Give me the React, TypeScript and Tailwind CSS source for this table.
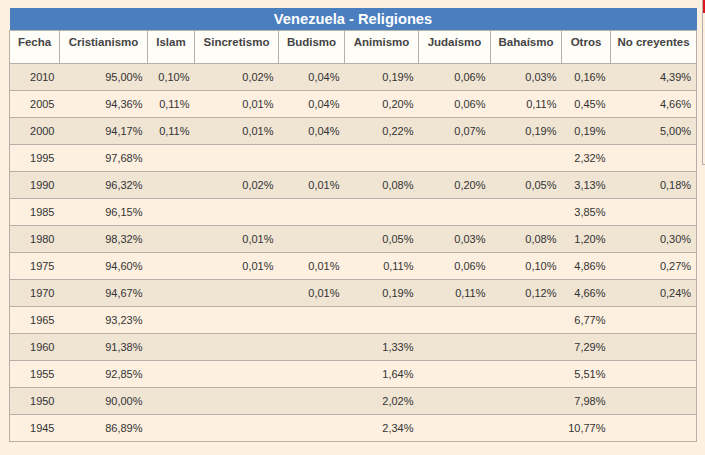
import React from "react";

const cols = [
  { name: "Fecha", w: 50 },
  { name: "Cristianismo", w: 88 },
  { name: "Islam", w: 47 },
  { name: "Sincretismo", w: 84 },
  { name: "Budismo", w: 66 },
  { name: "Animismo", w: 74 },
  { name: "Judaísmo", w: 72 },
  { name: "Bahaísmo", w: 71 },
  { name: "Otros", w: 49 },
  { name: "No creyentes", w: 86 },
];

const rows: string[][] = [
  ["2010", "95,00%", "0,10%", "0,02%", "0,04%", "0,19%", "0,06%", "0,03%", "0,16%", "4,39%"],
  ["2005", "94,36%", "0,11%", "0,01%", "0,04%", "0,20%", "0,06%", "0,11%", "0,45%", "4,66%"],
  ["2000", "94,17%", "0,11%", "0,01%", "0,04%", "0,22%", "0,07%", "0,19%", "0,19%", "5,00%"],
  ["1995", "97,68%", "", "", "", "", "", "", "2,32%", ""],
  ["1990", "96,32%", "", "0,02%", "0,01%", "0,08%", "0,20%", "0,05%", "3,13%", "0,18%"],
  ["1985", "96,15%", "", "", "", "", "", "", "3,85%", ""],
  ["1980", "98,32%", "", "0,01%", "", "0,05%", "0,03%", "0,08%", "1,20%", "0,30%"],
  ["1975", "94,60%", "", "0,01%", "0,01%", "0,11%", "0,06%", "0,10%", "4,86%", "0,27%"],
  ["1970", "94,67%", "", "", "0,01%", "0,19%", "0,11%", "0,12%", "4,66%", "0,24%"],
  ["1965", "93,23%", "", "", "", "", "", "", "6,77%", ""],
  ["1960", "91,38%", "", "", "", "1,33%", "", "", "7,29%", ""],
  ["1955", "92,85%", "", "", "", "1,64%", "", "", "5,51%", ""],
  ["1950", "90,00%", "", "", "", "2,02%", "", "", "7,98%", ""],
  ["1945", "86,89%", "", "", "", "2,34%", "", "", "10,77%", ""],
];

export default function App() {
  return (
    <div
      className="w-[705px] h-[455px] bg-[#fdf0e0] flex overflow-hidden text-[#333]"
      style={{ fontFamily: '"Liberation Sans", Arial, sans-serif' }}
    >
      <div className="pl-[9px] pt-[8px] shrink-0">
        <table className="table-fixed border-collapse w-[687px]">
          <colgroup>
            {cols.map((c) => (
              <col key={c.name} style={{ width: c.w }} />
            ))}
          </colgroup>
          <thead>
            <tr>
              <th
                colSpan={10}
                className="h-[22px] p-0 bg-[#4a7ebf] text-white text-[14.7px] font-bold leading-[22px] text-center"
              >
                Venezuela - Religiones
              </th>
            </tr>
            <tr>
              {cols.map((c) => (
                <th
                  key={c.name}
                  className="h-[33px] bg-[#fffdf8] border border-[#b8b0a8] align-top pt-[5px] px-0 text-[11.5px] leading-[13px] font-bold text-[#444] text-center whitespace-nowrap"
                >
                  {c.name}
                </th>
              ))}
            </tr>
          </thead>
          <tbody>
            {rows.map((r, i) => (
              <tr
                key={r[0]}
                className={
                  i % 2 === 0
                    ? "bg-[#f0e4d3] border border-[#b8b0a8]"
                    : "bg-[#fdf0e0] border border-[#b8b0a8]"
                }
              >
                {r.map((v, j) => (
                  <td
                    key={j}
                    className="h-[27px] p-0 pr-[5px] text-right text-[11px] leading-[13px] align-middle whitespace-nowrap"
                  >
                    {v}
                  </td>
                ))}
              </tr>
            ))}
          </tbody>
        </table>
      </div>
      <div className="ml-[5px] w-[10px] h-[165px] shrink-0 border-l border-b border-[#b8b0a8]">
        <div className="h-[13px] bg-[#e0141e]" />
      </div>
    </div>
  );
}
